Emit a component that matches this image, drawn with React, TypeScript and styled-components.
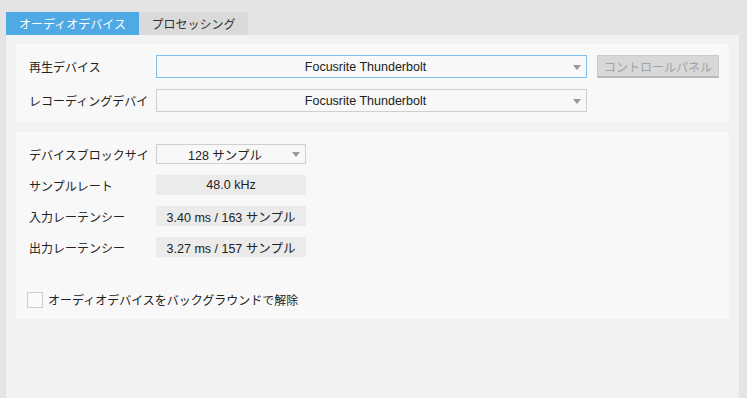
import React from "react";
import styled, { createGlobalStyle } from "styled-components";

const GlobalStyle = createGlobalStyle`
  html, body {
    margin: 0;
    padding: 0;
    background: #e4e4e4;
  }
  body {
    font-family: "Liberation Sans", "Noto Sans CJK JP", sans-serif;
    font-size: 12px;
    color: #222;
  }
`;

const Window = styled.div`
  height: 398px;
  padding: 12px 8px 0 6px;
  box-sizing: border-box;
  display: flex;
  flex-direction: column;
  overflow: hidden;
`;

const TabBar = styled.div`
  display: flex;
  height: 23px;
`;

const Tab = styled.div<{ $active?: boolean; $width: number }>`
  display: flex;
  align-items: center;
  justify-content: center;
  width: ${(p) => p.$width}px;
  background: ${(p) => (p.$active ? "#4ea9e4" : "#dadada")};
  color: ${(p) => (p.$active ? "#fff" : "#333")};
  font-size: 12px;
`;

const Panel = styled.div`
  flex: 1;
  background: #f2f2f2;
  padding: 9px 10px;
  display: flex;
  flex-direction: column;
  gap: 10px;
`;

const Section = styled.div<{ $pad: string; $gap: number }>`
  background: #f8f8f8;
  padding: ${(p) => p.$pad};
  display: flex;
  flex-direction: column;
  gap: ${(p) => p.$gap}px;
`;

const Row = styled.div`
  display: flex;
  align-items: center;
`;

const Label = styled.div`
  width: 127px;
  flex-shrink: 0;
  white-space: nowrap;
`;

const Select = styled.div<{ $width: number; $height: number; $focus?: boolean }>`
  position: relative;
  width: ${(p) => p.$width}px;
  height: ${(p) => p.$height}px;
  box-sizing: border-box;
  border: 1px solid ${(p) => (p.$focus ? "#7fbeea" : "#cfcfcf")};
  background: #f8f8f8;
  display: flex;
  align-items: center;
  justify-content: center;
  padding-right: 12px;
  font-size: 12.5px;
  &::after {
    content: "";
    position: absolute;
    right: 5px;
    top: 50%;
    margin-top: -2px;
    border-left: 4px solid transparent;
    border-right: 4px solid transparent;
    border-top: 5px solid #9a9a9a;
  }
`;

const Value = styled.div`
  width: 150px;
  height: 20px;
  background: #ebebeb;
  display: flex;
  align-items: center;
  justify-content: center;
  font-size: 12.5px;
`;

const PanelButton = styled.div`
  margin-left: 10px;
  width: 122px;
  height: 23px;
  box-sizing: border-box;
  background: #d8d8d8;
  border: 1px solid #cbcbcb;
  border-bottom: 2px solid #b8b8b8;
  color: #a3a3a3;
  display: flex;
  align-items: center;
  justify-content: center;
`;

const CheckRow = styled.label`
  display: flex;
  align-items: center;
  gap: 5px;
  margin-top: 23px;
  margin-left: -2px;
`;

const Box = styled.span`
  width: 16px;
  height: 16px;
  box-sizing: border-box;
  border: 1px solid #cdcdcd;
  background: #fafafa;
`;

export default function App() {
  return (
    <>
      <GlobalStyle />
      <Window>
        <TabBar>
          <Tab $active $width={133}>オーディオデバイス</Tab>
          <Tab $width={109}>プロセッシング</Tab>
        </TabBar>
        <Panel>
          <Section $pad="11px 10px 10px 13px" $gap={11}>
            <Row>
              <Label>再生デバイス</Label>
              <Select $width={431} $height={23} $focus>
                Focusrite Thunderbolt
              </Select>
              <PanelButton>コントロールパネル</PanelButton>
            </Row>
            <Row>
              <Label>レコーディングデバイ</Label>
              <Select $width={431} $height={23}>
                Focusrite Thunderbolt
              </Select>
            </Row>
          </Section>
          <Section $pad="12px 10px 11px 13px" $gap={11}>
            <Row>
              <Label>デバイスブロックサイ</Label>
              <Select $width={150} $height={20}>
                128 サンプル
              </Select>
            </Row>
            <Row>
              <Label>サンプルレート</Label>
              <Value>48.0 kHz</Value>
            </Row>
            <Row>
              <Label>入力レーテンシー</Label>
              <Value>3.40 ms / 163 サンプル</Value>
            </Row>
            <Row>
              <Label>出力レーテンシー</Label>
              <Value>3.27 ms / 157 サンプル</Value>
            </Row>
            <CheckRow>
              <Box />
              オーディオデバイスをバックグラウンドで解除
            </CheckRow>
          </Section>
        </Panel>
      </Window>
    </>
  );
}
